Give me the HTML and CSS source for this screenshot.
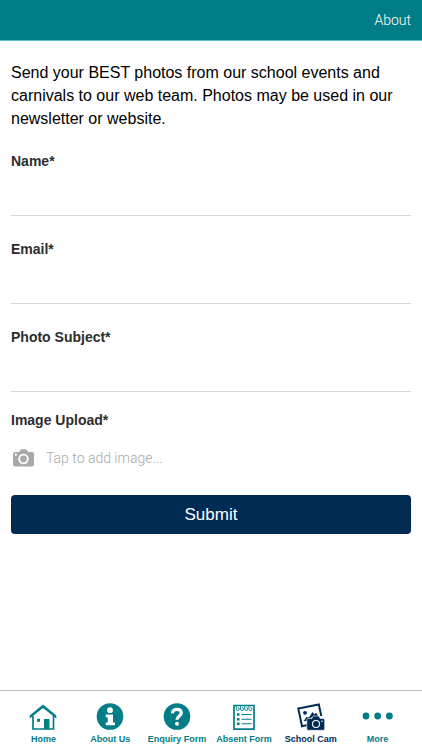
FILE: index.html
```html
<!DOCTYPE html>
<html lang="en">
<head>
<meta charset="utf-8">
<meta name="viewport" content="width=device-width, initial-scale=1">
<title>School Cam</title>
<link rel="stylesheet" href="styles.css">
</head>
<body>
<header class="topbar"><a class="topbar-link" href="#about">About</a></header>
<main class="content">
  <p class="intro">Send your BEST photos from our school events and carnivals to our web team. Photos may be used in our newsletter or website.</p>
  <form class="form">
    <div class="field">
      <label class="label" for="name">Name*</label>
      <input class="input" id="name" type="text">
    </div>
    <div class="field">
      <label class="label" for="email">Email*</label>
      <input class="input" id="email" type="email">
    </div>
    <div class="field">
      <label class="label" for="subject">Photo Subject*</label>
      <input class="input" id="subject" type="text">
    </div>
    <div class="upload">
      <span class="label" id="upload-label">Image Upload*</span>
      <button class="picker" type="button" aria-describedby="upload-label">
        <svg class="picker-icon" viewBox="0 0 21 18" aria-hidden="true">
          <path fill="#a9a9a9" fill-rule="evenodd" d="M2 3h4l1.200-2Q7.700.300 8.500.300h4Q13.300.300 13.800 1L15 3h4a2 2 0 0 1 2 2v10.500a2 2 0 0 1-2 2H2a2 2 0 0 1-2-2V5a2 2 0 0 1 2-2zM10.500 4.800a5.200 5.200 0 1 0 0 10.400a5.200 5.200 0 1 0 0-10.400zM10.500 6.600a3.400 3.400 0 1 1 0 6.800a3.400 3.400 0 1 1 0-6.800zM2.900 4.600a1.100 1.100 0 1 0 0 2.200a1.100 1.100 0 1 0 0-2.200z"/>
        </svg>
        <span>Tap to add image...</span>
      </button>
    </div>
    <button class="submit" type="submit">Submit</button>
  </form>
</main>
<nav class="tabs">
  <a class="tab" href="#home">
    <svg class="tab-icon" viewBox="0 0 28 28" aria-hidden="true">
      <path fill="currentColor" d="M14 1.500 27.300 12.600v3L14 4.900.700 15.600v-3z"/>
      <path fill="none" stroke="currentColor" stroke-width="1.700" d="M4 13v13h20.500V13"/>
      <path fill="currentColor" d="M15 16h5.500v10H15zM8 15.700h3v3H8z"/>
    </svg>
    <span>Home</span>
  </a>
  <a class="tab" href="#about-us">
    <svg class="tab-icon" viewBox="0 0 28 28" aria-hidden="true">
      <circle cx="14" cy="13.500" r="13.300" fill="currentColor"/>
      <circle cx="14" cy="7.200" r="2.900" fill="#fff"/>
      <path fill="#fff" d="M9.700 11.500h7.300v7.900h2v2.800H9.700v-2.800h2v-5.100h-2z"/>
    </svg>
    <span>About Us</span>
  </a>
  <a class="tab" href="#enquiry">
    <svg class="tab-icon" viewBox="0 0 28 28" aria-hidden="true">
      <circle cx="14" cy="13.500" r="13.300" fill="currentColor"/>
      <path fill="none" stroke="#fff" stroke-width="3.200" d="M9.500 10.300Q9.700 6.300 14 6.300T18.300 10C18.300 13 14 13.200 14 16.800"/>
      <circle cx="14" cy="20.700" r="2" fill="#fff"/>
    </svg>
    <span>Enquiry Form</span>
  </a>
  <a class="tab" href="#absent">
    <svg class="tab-icon" viewBox="0 0 28 28" aria-hidden="true">
      <path fill="none" stroke="currentColor" stroke-width="1.700" d="M4 2.500h20v23.700H4z"/>
      <path fill="none" stroke="currentColor" stroke-width=".9" d="M6.300 2v4a1.500 1.500 0 1 0 1.500-1.500M10.500 2v4a1.500 1.500 0 1 0 1.500-1.500M14.700 2v4a1.500 1.500 0 1 0 1.500-1.500M18.900 2v4a1.500 1.500 0 1 0 1.500-1.500"/>
      <path fill="currentColor" d="M7 10.200h2.500v2.500H7zM7 14.900h2.500v2.500H7zM7 19.600h2.500v2.500H7z"/>
      <path stroke="currentColor" stroke-width="1.100" d="M11.500 11.500h10M11.500 16.200h10M11.500 20.800h10"/>
    </svg>
    <span>Absent Form</span>
  </a>
  <a class="tab tab-active" href="#school-cam" aria-current="page">
    <svg class="tab-icon" viewBox="0 0 28 28" aria-hidden="true">
      <path fill="none" stroke="currentColor" stroke-width="2" d="M10.500 22 5 23.200 1.300 5.600 21.800 1.500 24.300 13"/>
      <circle cx="8" cy="9.800" r="1.900" fill="currentColor"/>
      <path fill="currentColor" d="M6.500 18.200 9.500 14l2.500.500 3.500-5.500 1.800 2.200 1.700-1.500 3 4.300-8 .500-1.500 3z"/>
      <path fill="currentColor" stroke="#fff" stroke-width=".6" d="M11.300 15.500h3.500l1.300-2.500h5.800l1.300 2.500h3q1.500 0 1.500 1.500v8.800q0 1.500-1.500 1.500H11.300q-1.500 0-1.500-1.500V17q0-1.500 1.500-1.500z"/>
      <circle cx="19" cy="21" r="3.500" fill="none" stroke="#fff" stroke-width="1.100"/>
      <circle cx="25" cy="18.300" r=".8" fill="#fff"/>
    </svg>
    <span>School Cam</span>
  </a>
  <a class="tab" href="#more">
    <svg class="tab-icon tab-icon-wide" viewBox="0 0 32 28" aria-hidden="true">
      <g fill="currentColor"><circle cx="4" cy="13" r="3.400"/><circle cx="15.700" cy="13" r="3.400"/><circle cx="27.400" cy="13" r="3.400"/></g>
    </svg>
    <span>More</span>
  </a>
</nav>
</body>
</html>
```
FILE: styles.css
```css
* {
  box-sizing: border-box;
}

body {
  margin: 0;
  min-height: 100vh;
  display: flex;
  flex-direction: column;
  background: #fff;
  color: #000;
  font-family: "Liberation Sans", Arial, sans-serif;
}

.topbar {
  display: flex;
  justify-content: flex-end;
  align-items: center;
  height: 41px;
  padding: 0 11px;
  background: #007d86;
  border-bottom: 1px solid #5fb9bf;
}

.topbar-link {
  color: #fff;
  font: 300 14px Roboto, sans-serif;
  text-decoration: none;
}

.content {
  flex: 1;
  padding: 20px 11px 0;
}

.intro {
  margin: 0;
  font-size: 16px;
  line-height: 23px;
}

.form {
  display: flex;
  flex-direction: column;
  margin-top: 21px;
}

.field {
  display: flex;
  flex-direction: column;
  margin-bottom: 23px;
}

.label {
  color: #2d2d2d;
  font-size: 14px;
  font-weight: bold;
  line-height: 20px;
}

.input {
  width: 100%;
  height: 45px;
  padding: 0;
  border: 0;
  border-bottom: 1px solid #d6d6d6;
  border-radius: 0;
  background: transparent;
  font: inherit;
  outline: 0;
}

.upload {
  display: flex;
  flex-direction: column;
  margin-top: -5px;
}

.picker {
  display: flex;
  align-items: center;
  gap: 12px;
  height: 56px;
  padding: 0 2px;
  border: 0;
  background: transparent;
  color: #a9a9a9;
  font: 300 14px Roboto, sans-serif;
}

.picker-icon {
  width: 21px;
  height: 18px;
}

.submit {
  height: 39px;
  margin-top: 9px;
  border: 0;
  border-radius: 4px;
  background: #002c54;
  color: #fff;
  font: 17px "Liberation Sans", Arial, sans-serif;
}

.tabs {
  display: flex;
  height: 60px;
  padding: 12px 11px 0 10px;
  border-top: 1px solid #c2c2c2;
}

.tab {
  flex: 1 1 0;
  display: flex;
  flex-direction: column;
  align-items: center;
  gap: 2px;
  color: #007d86;
  font-size: 9px;
  font-weight: bold;
  line-height: 12px;
  text-decoration: none;
  white-space: nowrap;
}

.tab-active {
  color: #002c54;
}

.tab-icon {
  width: 28px;
  height: 28px;
}

.tab-icon-wide {
  width: 32px;
}
```
